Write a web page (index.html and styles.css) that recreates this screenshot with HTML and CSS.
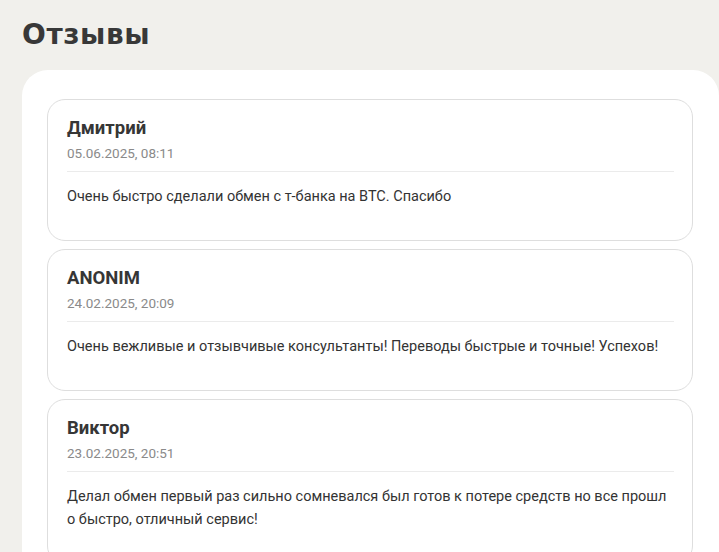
FILE: index.html
```html
<!DOCTYPE html>
<html lang="ru">
<head>
<meta charset="utf-8">
<title>Отзывы</title>
<link rel="stylesheet" href="styles.css">
</head>
<body>
<div class="page">
  <h1 class="title">Отзывы</h1>
  <section class="panel">
    <article class="card">
      <div class="name">Дмитрий</div>
      <div class="date">05.06.2025, 08:11</div>
      <div class="divider"></div>
      <p class="text">Очень быстро сделали обмен с т-банка на BTC. Спасибо</p>
    </article>
    <article class="card">
      <div class="name">ANONIM</div>
      <div class="date">24.02.2025, 20:09</div>
      <div class="divider"></div>
      <p class="text">Очень вежливые и отзывчивые консультанты! Переводы быстрые и точные! Успехов!</p>
    </article>
    <article class="card">
      <div class="name">Виктор</div>
      <div class="date">23.02.2025, 20:51</div>
      <div class="divider"></div>
      <p class="text">Делал обмен первый раз сильно сомневался был готов к потере средств но все прошл о быстро, отличный сервис!</p>
    </article>
  </section>
</div>
</body>
</html>
```

FILE: styles.css
```css
html, body {
  margin: 0;
  padding: 0;
  background: #f1f0ec;
  overflow: hidden;
}
.page {
  width: 719px;
  height: 552px;
  overflow: hidden;
  font-family: "Roboto", "Liberation Sans", sans-serif;
  color: #333;
}
.title {
  margin: 0;
  padding: 19px 0 0 22px;
  height: 70px;
  box-sizing: border-box;
  font-family: "DejaVu Sans", sans-serif;
  font-weight: 800;
  font-size: 28px;
  line-height: 32px;
  color: #383838;
  letter-spacing: 0.6px;
}
.panel {
  margin-left: 22px;
  background: #fff;
  border-radius: 26px 26px 0 0;
  padding: 29px 26px 0 25px;
  display: flex;
  flex-direction: column;
  gap: 8px;
  min-height: 500px;
}
.card {
  border: 1px solid #dedede;
  border-radius: 18px;
  padding: 16px 18px 32px 19px;
}
.name {
  font-size: 18.5px;
  font-weight: 700;
  line-height: 24px;
  color: #363636;
}
.date {
  margin-top: 4px;
  font-size: 13.5px;
  line-height: 18px;
  color: #8a8a8a;
}
.divider {
  margin-top: 9px;
  height: 1px;
  background: #ebebeb;
}
.text {
  margin: 13px 0 0;
  font-size: 14.5px;
  line-height: 23px;
  color: #333;
}
```
